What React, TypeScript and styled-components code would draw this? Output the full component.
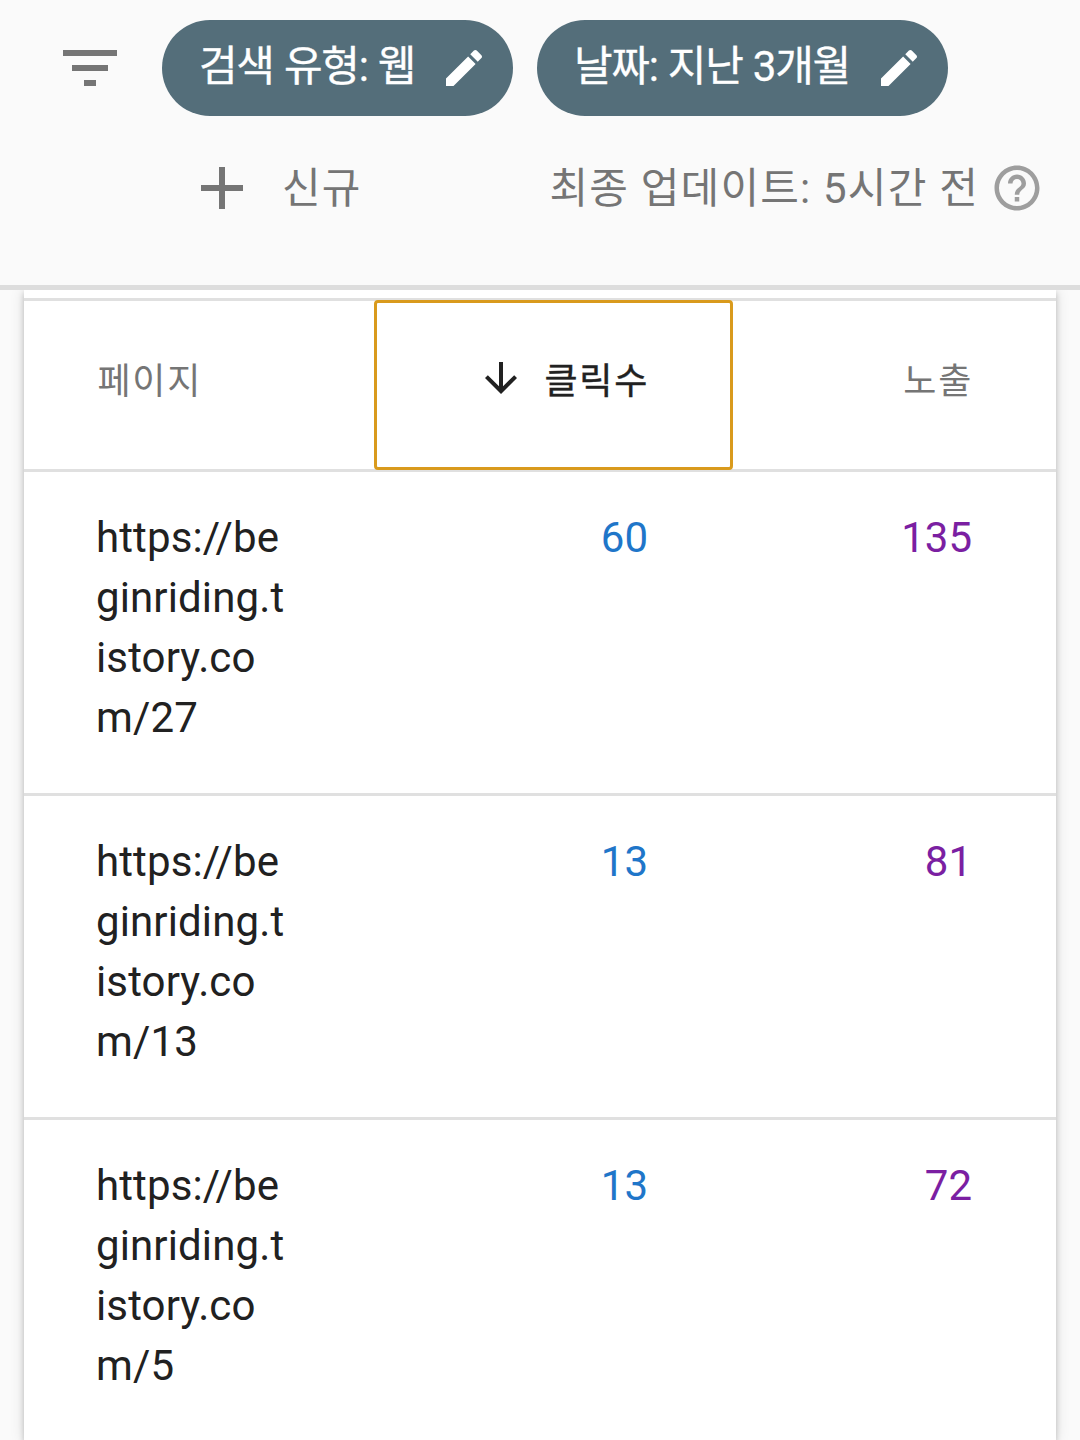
import React from 'react';
import styled, { createGlobalStyle } from 'styled-components';

const GlobalStyle = createGlobalStyle`
  * { box-sizing: border-box; }
  html, body { margin: 0; padding: 0; }
  body {
    background: #fafafa;
    font-family: Roboto, "Noto Sans CJK KR", sans-serif;
    font-size: 42px;
    color: #212121;
    overflow: hidden;
  }
`;

const Page = styled.div`
  width: 1080px;
  height: 1440px;
  overflow: hidden;
  display: flex;
  flex-direction: column;
  background: #fafafa;
`;

const FilterBar = styled.header`
  position: relative;
  z-index: 1;
  flex: none;
  height: 290px;
  padding-top: 19.5px;
  background: #fafafa;
  border-bottom: 5px solid #dddddd;
`;

const ChipRow = styled.div`
  display: flex;
  align-items: center;
  height: 96px;
  padding-left: 54px;
  gap: 24px;
`;

const FilterIconSlot = styled.div`
  display: flex;
  width: 84px;
  height: 96px;
  align-items: center;
`;

const Chip = styled.button<{ $width: number }>`
  display: flex;
  align-items: center;
  justify-content: space-between;
  width: ${(p) => p.$width}px;
  height: 96px;
  padding: 0 25px 0 37px;
  border: 0;
  border-radius: 48px;
  background: #546e7a;
  color: #fff;
  font: inherit;
  white-space: nowrap;
`;

const ChipLabel = styled.span`
  line-height: 60px;
  margin-top: -2px;
  letter-spacing: -1.3px;
  word-spacing: 1.2px;
  -webkit-text-stroke: 0.3px currentColor;
`;

const StatusRow = styled.div`
  display: flex;
  align-items: center;
  justify-content: space-between;
  height: 72px;
  margin-top: 36px;
  padding: 0 36px 0 186px;
  color: #757575;
`;

const NewButton = styled.button`
  display: flex;
  align-items: center;
  gap: 24px;
  padding: 0;
  border: 0;
  background: none;
  color: inherit;
  font: inherit;
`;

const Updated = styled.div`
  display: flex;
  align-items: center;
  gap: 11px;
  white-space: nowrap;
`;

const StatusText = styled.span`
  line-height: 60px;
  margin-top: 2px;
  letter-spacing: 1.2px;
`;

const Icon = styled.svg<{ $size: number; $color?: string }>`
  display: block;
  flex: none;
  width: ${(p) => p.$size}px;
  height: ${(p) => p.$size}px;
  fill: ${(p) => p.$color ?? 'currentColor'};
`;

const Card = styled.main`
  flex: 1;
  margin: 0 24px;
  padding-top: 8px;
  background: #fff;
  box-shadow: 0 3px 6px rgba(0, 0, 0, 0.2), 0 0 14px rgba(0, 0, 0, 0.12);
`;

const TableRow = styled.div<{ $head?: boolean }>`
  display: grid;
  grid-template-columns: 350px 359px 323px;
  height: ${(p) => (p.$head ? 171 : 324)}px;
  border-top: 3px solid #e0e0e0;
`;

const HeadCell = styled.div<{ $align?: 'end'; $active?: boolean }>`
  display: flex;
  align-items: center;
  justify-content: ${(p) => (p.$align === 'end' ? 'flex-end' : 'flex-start')};
  gap: 20px;
  height: 170px;
  margin-top: -1px;
  padding: 0 ${(p) => (p.$active ? 81 : 83)}px 14px 73.5px;
  font-size: 36px;
  letter-spacing: 1.7px;
  color: ${(p) => (p.$active ? '#212121' : '#757575')};
  border: 3px solid ${(p) => (p.$active ? '#d99a1c' : 'transparent')};
  border-width: ${(p) => (p.$active ? '3px' : '3px 0')};
  border-radius: 4px;
`;

const SortLabel = styled.span`
  -webkit-text-stroke: 0.4px currentColor;
`;

const UrlCell = styled.div`
  width: 262px;
  padding: 36px 0 0 72px;
  line-height: 60px;
  letter-spacing: 0.12px;
  word-break: break-all;
`;

const ValueCell = styled.div<{ $color: string; $inset: number }>`
  padding: 36px ${(p) => p.$inset}px 0 0;
  line-height: 60px;
  text-align: right;
  color: ${(p) => p.$color};
`;

const PencilIcon = () => (
  <Icon $size={48} viewBox="0 0 24 24">
    <path d="M3 17.25V21h3.75L17.81 9.94l-3.75-3.75L3 17.25zM20.71 7.04c.39-.39.39-1.02 0-1.41l-2.34-2.34c-.39-.39-1.02-.39-1.41 0l-1.83 1.83 3.75 3.75 1.83-1.83z" />
  </Icon>
);

const rows = [
  { url: 'https://beginriding.tistory.com/27', clicks: 60, views: 135 },
  { url: 'https://beginriding.tistory.com/13', clicks: 13, views: 81 },
  { url: 'https://beginriding.tistory.com/5', clicks: 13, views: 72 },
];

export default function App() {
  return (
    <Page>
      <GlobalStyle />
      <FilterBar>
        <ChipRow>
          <FilterIconSlot>
            <Icon $size={72} $color="#757575" viewBox="0 0 24 24">
              <path d="M10 18h4v-2h-4v2zM3 6v2h18V6H3zm3 7h12v-2H6v2z" />
            </Icon>
          </FilterIconSlot>
          <Chip $width={351}>
            <ChipLabel>검색 유형: 웹</ChipLabel>
            <PencilIcon />
          </Chip>
          <Chip $width={411}>
            <ChipLabel>날짜: 지난 3개월</ChipLabel>
            <PencilIcon />
          </Chip>
        </ChipRow>
        <StatusRow>
          <NewButton>
            <Icon $size={72} viewBox="0 0 24 24">
              <path d="M19 13h-6v6h-2v-6H5v-2h6V5h2v6h6v2z" />
            </Icon>
            <StatusText>신규</StatusText>
          </NewButton>
          <Updated>
            <StatusText>최종 업데이트: 5시간 전</StatusText>
            <Icon $size={54} $color="#9e9e9e" viewBox="0 0 24 24">
              <path d="M11 18h2v-2h-2v2zm1-16C6.48 2 2 6.48 2 12s4.48 10 10 10 10-4.48 10-10S17.52 2 12 2zm0 18c-4.41 0-8-3.59-8-8s3.59-8 8-8 8 3.59 8 8-3.59 8-8 8zm0-14c-2.21 0-4 1.79-4 4h2c0-1.1.9-2 2-2s2 .9 2 2c0 2-3 1.75-3 5h2c0-2.25 3-2.5 3-5 0-2.21-1.79-4-4-4z" />
            </Icon>
          </Updated>
        </StatusRow>
      </FilterBar>
      <Card>
        <TableRow $head>
          <HeadCell>페이지</HeadCell>
          <HeadCell $align="end" $active>
            <Icon $size={48} viewBox="0 0 24 24">
              <path d="M20 12l-1.41-1.41L13 16.17V4h-2v12.17l-5.58-5.59L4 12l8 8 8-8z" />
            </Icon>
            <SortLabel>클릭수</SortLabel>
          </HeadCell>
          <HeadCell $align="end">노출</HeadCell>
        </TableRow>
        {rows.map((row) => (
          <TableRow key={row.url}>
            <UrlCell>{row.url}</UrlCell>
            <ValueCell $color="#1f76c9" $inset={85}>
              {row.clicks}
            </ValueCell>
            <ValueCell $color="#7b1fa2" $inset={84}>
              {row.views}
            </ValueCell>
          </TableRow>
        ))}
      </Card>
    </Page>
  );
}
